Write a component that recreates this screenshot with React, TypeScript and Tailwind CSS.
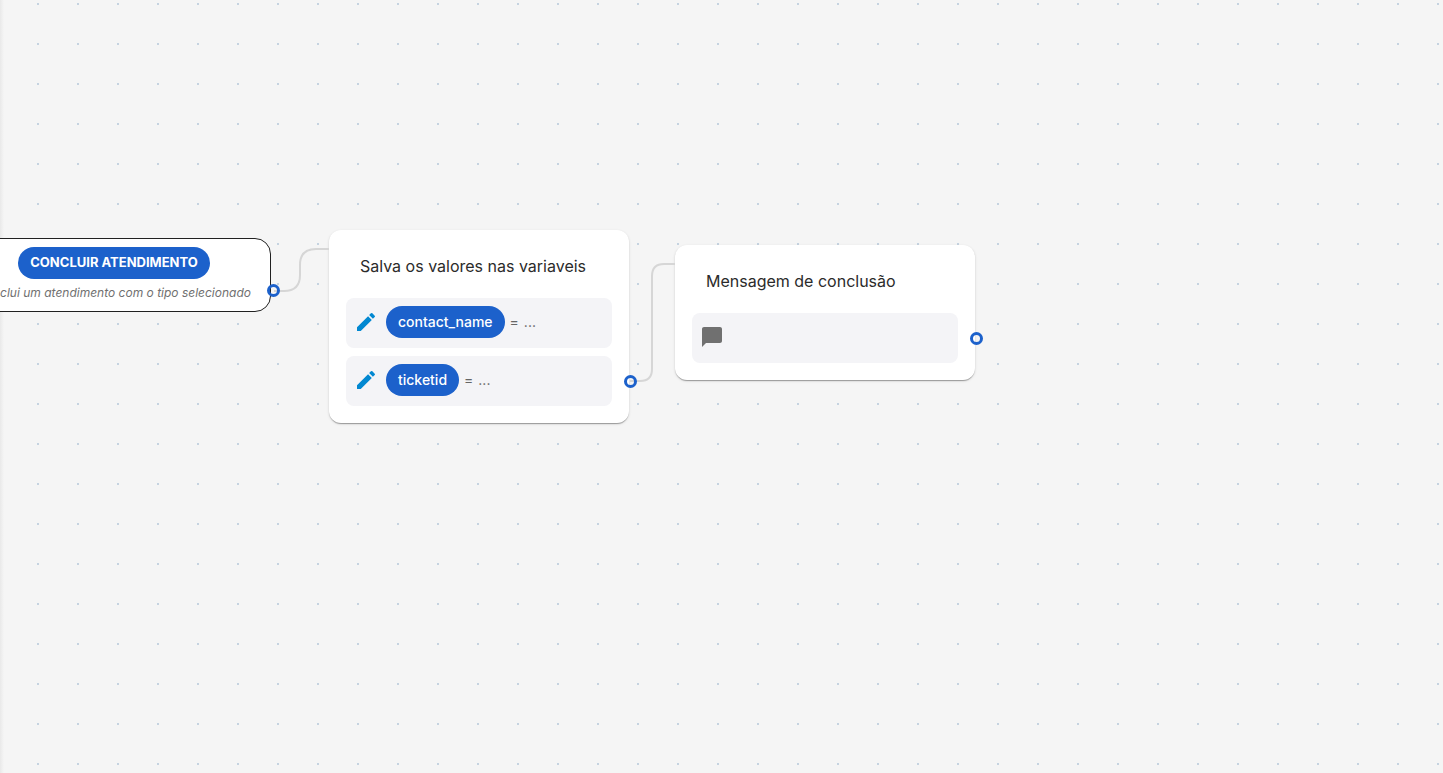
import type { ReactNode } from "react";
import { MdEdit, MdChatBubble } from "react-icons/md";

function Chip({ children, strong = false }: { children: ReactNode; strong?: boolean }) {
  return (
    <span
      className={`flex h-8 shrink-0 items-center rounded-full bg-[#1c61cb] px-3 text-white ${
        strong ? "text-[13px] font-bold" : "text-sm font-medium"
      }`}
    >
      {children}
    </span>
  );
}

function Port({ label, place }: { label: string; place: string }) {
  return (
    <button
      type="button"
      aria-label={label}
      className={`absolute size-[13px] rounded-full border-3 border-[#1c61cb] ${place}`}
    />
  );
}

function Card({ title, place, children }: { title: string; place: string; children: ReactNode }) {
  return (
    <section
      className={`absolute flex w-[300px] flex-col rounded-xl bg-white p-[17px] shadow-[0_2px_1px_-1px_rgba(0,0,0,0.2),0_1px_1px_0_rgba(0,0,0,0.14),0_1px_3px_0_rgba(0,0,0,0.12)] ${place}`}
    >
      <h2 className="px-3.5 pt-[7px] pb-5 text-base leading-6 text-[#2b2b2b]">{title}</h2>
      <div className="flex flex-col gap-2">{children}</div>
    </section>
  );
}

function Row({ children }: { children: ReactNode }) {
  return (
    <div className="flex h-[50px] items-center gap-2 rounded-lg bg-[#f4f4f7] px-2 pt-2 pb-2.5">
      {children}
    </div>
  );
}

function Assignment({ name }: { name: string }) {
  return (
    <Row>
      <MdEdit className="size-6 text-[#0288d1]" aria-hidden="true" />
      <div className="flex items-center gap-[5px] text-sm text-[#666666]">
        <Chip>{name}</Chip>
        <span>=</span>
        <span>...</span>
      </div>
    </Row>
  );
}

export default function App() {
  return (
    <main className="relative min-h-screen overflow-hidden bg-[#f5f5f5] bg-[conic-gradient(at_2px_2px,transparent_75%,#c5d3e0_0)] bg-size-[40px_40px] bg-position-[37px_3px] font-['Inter',sans-serif]">
      <div className="absolute inset-y-0 left-0 w-1 bg-linear-to-r from-black/5 to-transparent" />

      <section className="absolute top-[238px] left-[-43px] flex w-[314px] flex-col items-center rounded-2xl border border-[#212121] bg-white px-5 py-2">
        <Chip strong>CONCLUIR ATENDIMENTO</Chip>
        <p className="pt-1 text-xs leading-5 whitespace-nowrap text-[#707070] italic">
          Conclui um atendimento com o tipo selecionado
        </p>
      </section>

      <Card title="Salva os valores nas variaveis" place="top-[230px] left-[329px]">
        <Assignment name="contact_name" />
        <Assignment name="ticketid" />
      </Card>

      <Card title="Mensagem de conclusão" place="top-[245px] left-[675px]">
        <Row>
          <MdChatBubble className="size-6 text-[#707070]" aria-hidden="true" />
        </Row>
      </Card>

      <svg
        className="pointer-events-none absolute top-0 left-0 h-full w-full"
        fill="none"
        stroke="#d6d6d6"
        strokeWidth="2"
        aria-hidden="true"
      >
        <path d="M274 291H284Q300 291 300 275V265Q300 249 316 249H329" />
        <path d="M630 381H640Q652 381 652 369V276Q652 264 664 264H675" />
      </svg>

      <Port label="Saída de Concluir atendimento" place="top-[284px] left-[267px]" />
      <Port label="Saída de Salva os valores nas variaveis" place="top-[375px] left-[624px]" />
      <Port label="Saída de Mensagem de conclusão" place="top-[332px] left-[970px]" />
    </main>
  );
}
